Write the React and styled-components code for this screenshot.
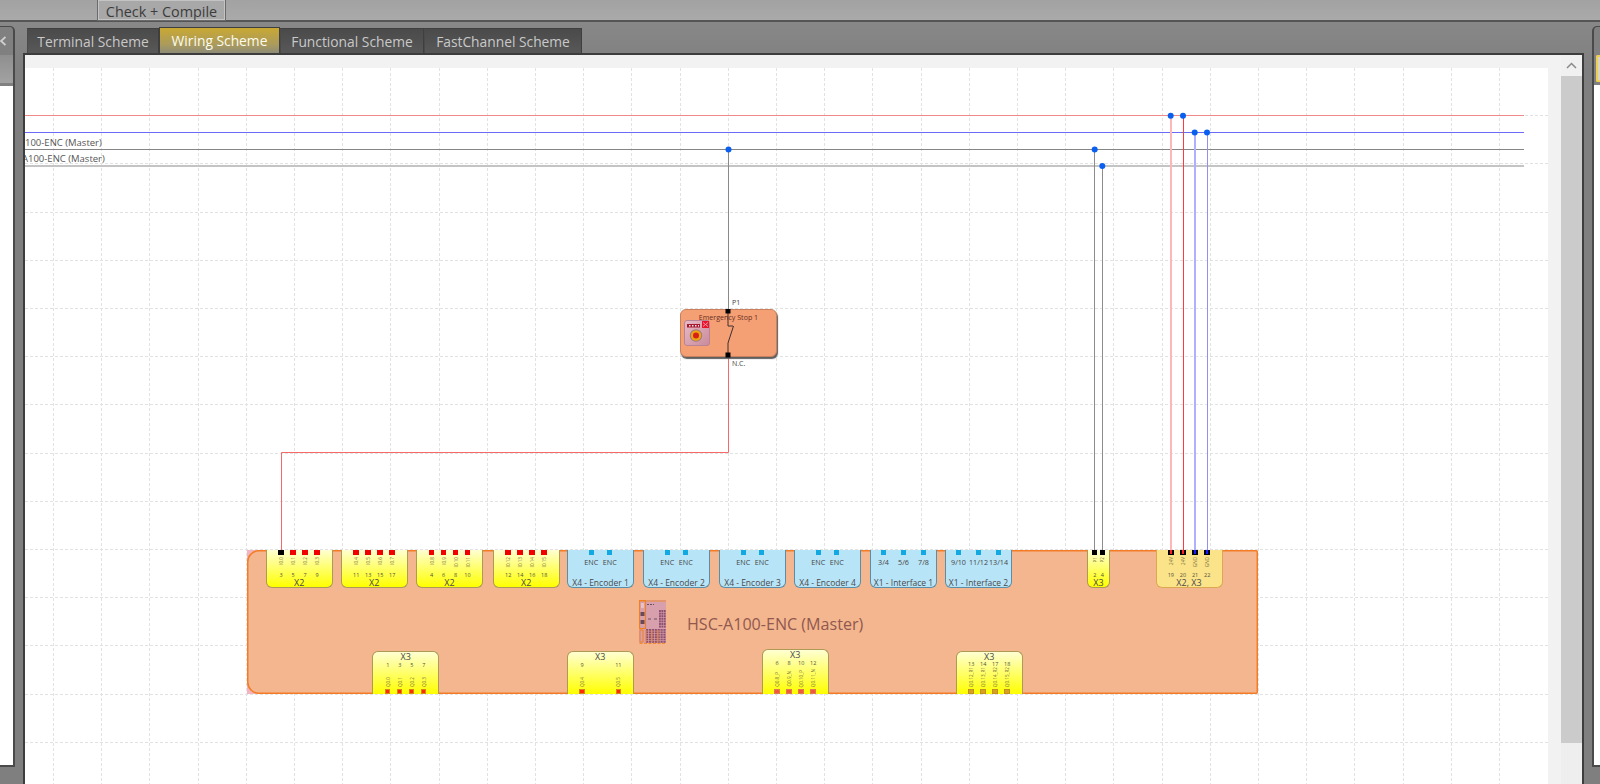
import React from "react";
import styled, { createGlobalStyle, css } from "styled-components";

const GlobalStyle = createGlobalStyle`
  html, body { margin: 0; padding: 0; background: #808080; }
  body { font-family: "Open Sans", "Noto Sans", sans-serif; }
`;

// page coordinates of the drawing sheet
const SHEET_X = 25;
const SHEET_Y = 68;
const SHEET_W = 1523;
const SHEET_H = 716;
const MODULE_X = 247;

const Page = styled.div`
  width: 1600px;
  height: 784px;
  overflow: hidden;
  display: flex;
  flex-direction: column;
  background: linear-gradient(#8c8c8c, #7f7f7f 70px);
`;

const TopBar = styled.div`
  flex: none;
  height: 20px;
  padding-left: 97px;
  display: flex;
  background: linear-gradient(#a2a2a2, #aaaaaa);
  border-bottom: 2px solid #555;
`;

const TopButton = styled.div`
  width: 127px;
  height: 20px;
  text-align: center;
  font-size: 14.4px;
  line-height: 24px;
  color: #3c3c3c;
  background: #a8a8a8;
  border: 1px solid #6a6a6a;
  border-top: none;
  box-shadow: inset 0 0 0 1px #c4c4c4;
  overflow: hidden;
`;

const Body = styled.div`
  flex: 1;
  min-height: 0;
  display: flex;
`;

const SidePanel = styled.div`
  flex: none;
  height: 741px;
  margin-top: 4px;
  width: ${(p) => p.$w}px;
  display: flex;
  flex-direction: column;
  box-sizing: border-box;
  background: #808080;
  border-top: 1px solid #4a4a4a;
  ${(p) =>
    p.$right
      ? css`
          border-left: 2px solid #4a4a4a;
          border-top-left-radius: 5px;
        `
      : css`
          border-right: 2px solid #4a4a4a;
          border-top-right-radius: 5px;
        `}
`;

const SideTop = styled.div`
  flex: none;
  height: 28px;
  display: flex;
  align-items: center;
`;

const SideHeader = styled.div`
  flex: none;
  height: 28px;
  background: linear-gradient(#8f8f8f, #a2a2a2);
  ${(p) =>
    p.$gold &&
    css`
      margin-left: 2px;
      height: 27px;
      box-sizing: border-box;
      background: #d6d6c8;
      border: 2px solid #f0cf55;
      border-right: none;
      border-radius: 2px 0 0 2px;
    `}
`;

const SideWhite = styled.div`
  flex: 1;
  margin-top: 3px;
  background: #fff;
  ${(p) => p.$bottom && "border-bottom: 2px solid #4a4a4a;"}
`;

const Center = styled.div`
  flex: 1;
  min-width: 0;
  margin-left: 8px;
  margin-right: 8px;
  display: flex;
  flex-direction: column;
`;

const TabRow = styled.div`
  flex: none;
  height: 31px;
  padding-left: 4px;
  display: flex;
  align-items: flex-end;
`;

const Tab = styled.div`
  box-sizing: border-box;
  width: ${(p) => p.$w}px;
  height: ${(p) => (p.$active ? 26 : 25)}px;
  text-align: center;
  font-size: 13.8px;
  line-height: 25px;
  white-space: nowrap;
  color: ${(p) => (p.$active ? "#fbfbf0" : "#c9c9c9")};
  background: ${(p) =>
    p.$active
      ? "linear-gradient(#c9a833, #ab9b5c 65%, #8e8c78)"
      : "linear-gradient(#4a4a4a, #585858)"};
  border: 1px solid #3f3f3f;
  border-bottom: none;
  border-left-color: ${(p) => (p.$active ? "#3f3f3f" : "#4a4a4a")};
`;

const Frame = styled.div`
  flex: 1;
  min-height: 0;
  display: flex;
  box-sizing: border-box;
  border: solid #3d3d3d;
  border-width: 2px 2px 0 2px;
  background: #f2f2f2;
`;

const CanvasArea = styled.div`
  flex: 1;
  min-width: 0;
  padding-top: 13px;
  overflow: hidden;
`;

const Sheet = styled.div`
  position: relative;
  width: ${SHEET_W}px;
  height: ${SHEET_H}px;
  background: #fff;
  overflow: hidden;
`;

const SheetDrawing = styled.svg`
  position: absolute;
  left: 0;
  top: 0;
`;

const BusLabel = styled.div`
  position: absolute;
  left: ${(p) => p.$x}px;
  top: ${(p) => p.$y}px;
  font-size: 9.5px;
  line-height: 12px;
  color: #555;
  white-space: nowrap;
`;

const Scrollbar = styled.div`
  flex: none;
  width: 21px;
  display: flex;
  flex-direction: column;
  background: #eeeeee;
`;

const ScrollUp = styled.div`
  flex: none;
  height: 21px;
  display: flex;
  align-items: center;
  justify-content: center;
  background: #f0f0f0;
`;

const ScrollThumb = styled.div`
  flex: none;
  height: 667px;
  background: #cbcbcb;
`;

const StopNode = styled.div`
  position: absolute;
  left: ${680 - SHEET_X}px;
  top: ${309 - SHEET_Y}px;
  width: 97px;
  height: 48px;
  box-sizing: border-box;
  background: #f59f75;
  border: 1px solid #c9805c;
  border-radius: 6px;
  box-shadow: 1px 2px 1px #5f5f5f;
`;

const StopTitle = styled.div`
  padding-top: 2px;
  text-align: center;
  font-size: 7.1px;
  line-height: 11px;
  color: #6a3020;
  white-space: nowrap;
`;

const StopIcon = styled.svg`
  position: absolute;
  left: 3px;
  top: 10px;
`;

const SwitchDrawing = styled.svg`
  position: absolute;
  left: 41px;
  top: -1px;
`;

const PortName = styled.div`
  position: absolute;
  left: 51px;
  top: ${(p) => p.$top}px;
  font-size: 7px;
  line-height: 9px;
  color: #444;
`;

const ModuleBox = styled.div`
  position: absolute;
  left: ${MODULE_X - SHEET_X}px;
  top: ${550 - SHEET_Y}px;
  width: 1011px;
  height: 144px;
  background: linear-gradient(90deg, #f2b4c0 14px, transparent 14px);
`;

const ModuleBody = styled.div`
  position: relative;
  width: 100%;
  height: 100%;
  display: flex;
  align-items: flex-start;
  background: #f4b68e;
  box-shadow: inset 0 0 0 1.5px #f47c26;
  border-radius: 12px 2px 2px 12px;
`;

const ModuleInfo = styled.div`
  position: absolute;
  left: ${639 - MODULE_X}px;
  top: 50px;
  display: flex;
  align-items: center;
  gap: 20px;
`;

const ModuleTitle = styled.div`
  margin-top: 3px;
  font-size: 16.1px;
  line-height: 20px;
  color: #90584e;
  white-space: nowrap;
`;

const tones = {
  yellow: css`
    background: linear-gradient(#ffffd2, #ffff00);
    border-color: #ad9a55;
  `,
  amber: css`
    background: #fbe389;
    border-color: #dca850;
  `,
  blue: css`
    background: #b8e4f8;
    border-color: #5b8ea6;
  `,
};

const Connector = styled.div`
  position: absolute;
  left: ${(p) => p.$x - MODULE_X}px;
  width: ${(p) => p.$w || 67}px;
  box-sizing: border-box;
  display: flex;
  flex-direction: ${(p) => (p.$bottom ? "column-reverse" : "column")};
  border: 1px solid;
  ${(p) => tones[p.$tone]}
  ${(p) =>
    p.$bottom
      ? css`
          bottom: 0;
          height: ${p.$tall ? 45 : 43}px;
          border-bottom: none;
          border-radius: 6px 6px 0 0;
        `
      : css`
          top: 0;
          height: 38px;
          border-top: none;
          border-radius: 0 0 6px 6px;
        `}
`;

const ConnectorTitle = styled.div`
  flex: none;
  height: ${(p) => (p.$bottom ? 10 : 9)}px;
  text-align: center;
  font-size: ${(p) => (p.$small ? 8.5 : 9)}px;
  line-height: ${(p) => (p.$bottom ? 10 : 9)}px;
  color: #4a4a4a;
  white-space: nowrap;
`;

const PinRow = styled.div`
  flex: 1;
  min-height: 0;
  display: flex;
  justify-content: center;
  margin: 0 -1px;
`;

const PinColumn = styled.div`
  flex: none;
  width: ${(p) => p.$w}px;
  display: flex;
  flex-direction: ${(p) => (p.$bottom ? "column-reverse" : "column")};
  align-items: center;
`;

const Pin = styled.div`
  position: relative;
  flex: none;
  width: 5.4px;
  height: 5px;
  box-sizing: border-box;
  background: ${(p) => p.$fill};
  ${(p) => p.$edge && `border: 1px solid ${p.$edge};`}
  ${(p) =>
    p.$wire &&
    css`
      &::after {
        content: "";
        position: absolute;
        left: 1.7px;
        top: 0;
        width: 2px;
        height: 4px;
        background: ${p.$wire};
      }
    `}
`;

const PinText = styled.div`
  flex: none;
  margin: ${(p) => (p.$bottom ? "0 0 2px" : "2px 0 0")};
  writing-mode: vertical-rl;
  transform: rotate(180deg);
  font-size: 4.6px;
  line-height: 6px;
  color: #77703c;
  white-space: nowrap;
`;

const PinNumber = styled.div`
  flex: none;
  ${(p) => (p.$bottom ? "margin-bottom: auto;" : "margin-top: auto;")}
  height: 6px;
  font-size: 5.5px;
  line-height: 6px;
  color: #4f4f3a;
`;

const PinCaption = styled.div`
  flex: none;
  margin-top: 2px;
  font-size: 7.2px;
  line-height: 10px;
  color: #444;
  white-space: nowrap;
`;

const red = { $fill: "#f00000" };
const black = { $fill: "#000" };
const cyan = { $fill: "#12a8e2" };

const ioPins = (labels, numbers, first = red) =>
  labels.map((label, i) => ({
    label: `I${label}`,
    number: numbers[i],
    pin: i === 0 ? first : red,
  }));

const topConnectors = [
  { x: 265.7, title: "X2", tone: "yellow", w: 12, pins: ioPins(["0.0", "0.1", "0.2", "0.3"], [3, 5, 7, 9], black) },
  { x: 340.7, title: "X2", tone: "yellow", w: 12, pins: ioPins(["0.4", "0.5", "0.6", "0.7"], [11, 13, 15, 17]) },
  { x: 416, title: "X2", tone: "yellow", w: 12, pins: ioPins(["0.8", "0.9", "0.10", "0.11"], [4, 6, 8, 10]) },
  { x: 492.7, title: "X2", tone: "yellow", w: 12, pins: ioPins(["0.12", "0.13", "0.14", "0.15"], [12, 14, 16, 18]) },
];

const encoders = [567, 643, 719, 794].map((x, i) => ({
  x,
  title: `X4 - Encoder ${i + 1}`,
  w: 18.5,
  captions: ["ENC", "ENC "],
}));

const interfaces = [
  { x: 870, title: "X1 - Interface 1", w: 20, captions: ["3/4", "5/6", "7/8"] },
  { x: 945, title: "X1 - Interface 2", w: 20, captions: ["9/10", "11/12", "13/14"] },
];

const qPin = { $fill: "#ff2a00", $edge: "#d9851c" };
const qPinSoft = { $fill: "#f4583c", $edge: "#e07a50" };
const qPinGold = { $fill: "#d8a020", $edge: "#c09020" };

const bottomConnectors = [
  { x: 372.3, w: 12, pin: qPin, labels: ["Q0.0", "Q0.1", "Q0.2", "Q0.3"], numbers: [1, 3, 5, 7] },
  { x: 566.7, w: 36.3, pin: qPin, labels: ["Q0.4", "Q0.5"], numbers: [9, 11] },
  { x: 761.7, w: 12, tall: true, pin: qPinSoft, labels: ["Q0.8_P", "Q0.9_N", "Q0.10_P", "Q0.11_N"], numbers: [6, 8, 10, 12] },
  { x: 955.7, w: 12, pin: qPinGold, labels: ["Q0.12_R1", "Q0.13_R1", "Q0.14_R2", "Q0.15_R2"], numbers: [13, 14, 17, 18] },
];

const busLines = [
  { y: 115.5, color: "#f08a8a", width: 1 },
  { y: 132.5, color: "#6a6af5", width: 1 },
  { y: 149.5, color: "#858585", width: 1 },
  { y: 166, color: "#c4c4c4", width: 2 },
];

const droppers = [
  { x: 1094.5, y: 149.5, color: "#8c8c8c", width: 1 },
  { x: 1102.5, y: 166, color: "#8c8c8c", width: 1 },
  { x: 1171, y: 115.5, color: "#ffb6b6", width: 2 },
  { x: 1183.5, y: 115.5, color: "#ff3a3a", width: 1 },
  { x: 1195, y: 132.5, color: "#b0b0ff", width: 2 },
  { x: 1207.5, y: 132.5, color: "#9090ee", width: 1 },
];

const dots = [
  [728.5, 149.5],
  [1094.7, 149.5],
  [1102.3, 166],
  [1170.7, 115.7],
  [1183, 115.7],
  [1194.7, 132.5],
  [1207, 132.5],
];

const gridX = Array.from({ length: 31 }, (_, i) => Math.round(53 + i * 48.2) + 0.5);
const gridY = Array.from({ length: 15 }, (_, i) => Math.round(67 + i * 48.2) + 0.5);

function WiringDrawing() {
  return (
    <SheetDrawing
      width={SHEET_W}
      height={SHEET_H}
      viewBox={`${SHEET_X} ${SHEET_Y} ${SHEET_W} ${SHEET_H}`}
    >
      <g stroke="#e2e2e2" strokeWidth="1" strokeDasharray="3 2">
        {gridX.map((x) => (
          <line key={x} x1={x} y1={SHEET_Y} x2={x} y2={784} />
        ))}
        {gridY.map((y) => (
          <line key={y} x1={SHEET_X} y1={y} x2={1548} y2={y} />
        ))}
      </g>
      {busLines.map((l) => (
        <line key={l.y} x1={SHEET_X} y1={l.y} x2={1524} y2={l.y} stroke={l.color} strokeWidth={l.width} />
      ))}
      {droppers.map((d) => (
        <line key={d.x} x1={d.x} y1={d.y} x2={d.x} y2={552} stroke={d.color} strokeWidth={d.width} />
      ))}
      <line x1={728.5} y1={149.5} x2={728.5} y2={310} stroke="#8a8a8a" strokeWidth="1" />
      <path d="M728.5 356V452.5H281.5V551" fill="none" stroke="#f46a6a" strokeWidth="1" />
      {dots.map(([x, y]) => (
        <circle key={x} cx={x} cy={y} r="3" fill="#0a5ff0" />
      ))}
    </SheetDrawing>
  );
}

function EmergencyStopGlyph() {
  return (
    <StopIcon width="26" height="26" viewBox="0 0 26 26">
      <defs>
        <linearGradient id="stopBody" x1="0" y1="0" x2="1" y2="1">
          <stop offset="0" stopColor="#e8bcc6" />
          <stop offset="1" stopColor="#c98a9c" />
        </linearGradient>
      </defs>
      <rect x="0.5" y="0.5" width="25" height="25" rx="2.5" fill="url(#stopBody)" stroke="#b98496" />
      <rect x="3" y="4" width="13" height="3.5" fill="#a81830" />
      <path d="M5 5.7h1.5M8 5.7h1.5M11 5.7h1.5M14 5.7h1" stroke="#f6e6e6" strokeWidth="1.4" />
      <rect x="18" y="1" width="7" height="7" fill="#e8142c" />
      <path d="M19 2.5l5 4M24 2.5l-5 4" stroke="#f8a0a8" strokeWidth="0.9" />
      <circle cx="12" cy="15.5" r="6.2" fill="#9c7a7e" />
      <circle cx="12" cy="15.5" r="5.2" fill="#f0a410" />
      <circle cx="12" cy="15.5" r="3" fill="#d8201a" />
    </StopIcon>
  );
}

function ModuleChip() {
  const cells = [];
  for (let row = 0; row < 7; row++) {
    for (let col = 0; col < 3; col++) {
      cells.push(<rect key={`r${row}${col}`} x={20 + col * 2.4} y={10 + row * 2.6} width="1.9" height="2" fill="#8e5070" />);
    }
  }
  for (let row = 0; row < 6; row++) {
    for (let col = 0; col < 7; col++) {
      cells.push(<rect key={`b${row}${col}`} x={7 + col * 2.9} y={29 + row * 2.4} width="2.2" height="1.8" fill="#8e5070" />);
    }
  }
  return (
    <svg width="28" height="44" viewBox="0 0 28 44">
      <rect x="0" y="0" width="27" height="43" fill="#d7a0ac" />
      <rect x="0" y="0.5" width="27" height="1" fill="#f08a30" />
      <rect x="0.5" y="0.5" width="6" height="28" fill="none" stroke="#f08020" strokeWidth="1.2" />
      <rect x="2" y="3" width="3" height="5" fill="#e8c0c8" />
      <rect x="1.5" y="12" width="4" height="4" fill="#6a4a5a" />
      <rect x="1.5" y="20" width="4" height="4" fill="#6a4a5a" />
      <path d="M8 4.5h2M11 4.5h2M14 4.5h1M9 19h3M15 19h3" stroke="#6a5060" strokeWidth="1" />
      {cells}
      <path d="M1 30v12h3v-12zM7 30v12M13 30v12M19 30v12" fill="none" stroke="#f08020" strokeWidth="1" />
      <path d="M0.5 43.3h26" stroke="#f08020" strokeWidth="1" strokeDasharray="3 1.5" />
    </svg>
  );
}

function renderPin(pin) {
  return <Pin {...pin} />;
}

export default function App() {
  return (
    <Page>
      <GlobalStyle />
      <TopBar>
        <TopButton>Check + Compile</TopButton>
      </TopBar>
      <Body>
        <SidePanel $w={15}>
          <SideTop>
            <svg width="6" height="10" viewBox="0 0 6 10">
              <path d="M5.5 1L1 5l4.5 4" fill="none" stroke="#cfcfcf" strokeWidth="1.8" />
            </svg>
          </SideTop>
          <SideHeader />
          <SideWhite $bottom />
        </SidePanel>

        <Center>
          <TabRow>
            <Tab $w={132}>Terminal Scheme</Tab>
            <Tab $w={121} $active>Wiring Scheme</Tab>
            <Tab $w={144}>Functional Scheme</Tab>
            <Tab $w={158}>FastChannel Scheme</Tab>
          </TabRow>
          <Frame>
            <CanvasArea>
              <Sheet>
                <WiringDrawing />
                <BusLabel $x={0} $y={69}>100-ENC (Master)</BusLabel>
                <BusLabel $x={-3} $y={85}>A100-ENC (Master)</BusLabel>

                <StopNode>
                  <StopTitle>Emergency Stop 1</StopTitle>
                  <EmergencyStopGlyph />
                  <SwitchDrawing width="14" height="50" viewBox="0 0 14 50">
                    <path d="M6 2V17H11M11.5 17L6 34V46" fill="none" stroke="#3a3030" strokeWidth="1" />
                    <rect x="3.5" y="0" width="5" height="4.5" fill="#000" />
                    <rect x="3.5" y="43.5" width="5" height="5" fill="#000" />
                  </SwitchDrawing>
                  <PortName $top={-12}>P1</PortName>
                  <PortName $top={49}>N.C.</PortName>
                </StopNode>

                <ModuleBox>
                  <ModuleBody>
                    {topConnectors.map((c) => (
                      <Connector key={c.x} $x={c.x} $tone={c.tone}>
                        <PinRow>
                          {c.pins.map((p) => (
                            <PinColumn key={p.label} $w={c.w}>
                              {renderPin(p.pin)}
                              <PinText>{p.label}</PinText>
                              <PinNumber>{p.number}</PinNumber>
                            </PinColumn>
                          ))}
                        </PinRow>
                        <ConnectorTitle>{c.title}</ConnectorTitle>
                      </Connector>
                    ))}

                    {[...encoders, ...interfaces].map((c) => (
                      <Connector key={c.x} $x={c.x} $tone="blue">
                        <PinRow>
                          {c.captions.map((text) => (
                            <PinColumn key={text} $w={c.w}>
                              {renderPin(cyan)}
                              <PinCaption>{text}</PinCaption>
                            </PinColumn>
                          ))}
                        </PinRow>
                        <ConnectorTitle $small>{c.title}</ConnectorTitle>
                      </Connector>
                    ))}

                    <Connector $x={1087} $w={23} $tone="yellow">
                      <PinRow>
                        {[["P1", 2], ["P2", 4]].map(([label, number]) => (
                          <PinColumn key={label} $w={7.6}>
                            {renderPin(black)}
                            <PinText>{label}</PinText>
                            <PinNumber>{number}</PinNumber>
                          </PinColumn>
                        ))}
                      </PinRow>
                      <ConnectorTitle>X3</ConnectorTitle>
                    </Connector>

                    <Connector $x={1155.5} $tone="amber">
                      <PinRow>
                        {[
                          ["24V", 19, "#ff2020"],
                          ["24V", 20, "#ff2020"],
                          ["GND", 21, "#1a1aff"],
                          ["GND", 22, "#1a1aff"],
                        ].map(([label, number, wire]) => (
                          <PinColumn key={number} $w={12.1}>
                            <Pin $fill="#000" $wire={wire} />
                            <PinText>{label}</PinText>
                            <PinNumber>{number}</PinNumber>
                          </PinColumn>
                        ))}
                      </PinRow>
                      <ConnectorTitle>X2, X3</ConnectorTitle>
                    </Connector>

                    <ModuleInfo>
                      <ModuleChip />
                      <ModuleTitle>HSC-A100-ENC (Master)</ModuleTitle>
                    </ModuleInfo>

                    {bottomConnectors.map((c) => (
                      <Connector key={c.x} $x={c.x} $tone="yellow" $bottom $tall={c.tall}>
                        <PinRow>
                          {c.labels.map((label, i) => (
                            <PinColumn key={label} $w={c.w} $bottom>
                              {renderPin(c.pin)}
                              <PinText $bottom>{label}</PinText>
                              <PinNumber $bottom>{c.numbers[i]}</PinNumber>
                            </PinColumn>
                          ))}
                        </PinRow>
                        <ConnectorTitle $bottom>X3</ConnectorTitle>
                      </Connector>
                    ))}
                  </ModuleBody>
                </ModuleBox>
              </Sheet>
            </CanvasArea>
            <Scrollbar>
              <ScrollUp>
                <svg width="11" height="7" viewBox="0 0 11 7">
                  <path d="M1 6l4.5-4.5L10 6" fill="none" stroke="#8a8a8a" strokeWidth="1.5" />
                </svg>
              </ScrollUp>
              <ScrollThumb />
            </Scrollbar>
          </Frame>
        </Center>

        <SidePanel $w={8} $right>
          <SideTop />
          <SideHeader $gold />
          <SideWhite $bottom />
        </SidePanel>
      </Body>
    </Page>
  );
}
